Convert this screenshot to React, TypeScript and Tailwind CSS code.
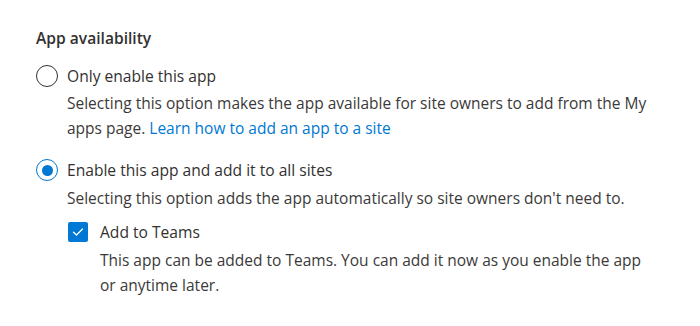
import React from "react";

export default function App() {
  return (
    <div className="w-[700px] h-[326px] bg-white text-[#323130] pl-[36px] pt-[27px] font-['Open_Sans',sans-serif]">
      <div className="text-[15.6px] leading-[22px] font-semibold">App availability</div>

      <div className="mt-[16px] flex items-center">
        <div className="w-[22px] h-[22px] rounded-full border border-[#323130] box-border" />
        <div className="ml-[9px] text-[15.6px] leading-[22px]">Only enable this app</div>
      </div>
      <div className="pl-[31px] mt-[4px] text-[15.5px] leading-[25px] text-[#3b3a39]">
        Selecting this option makes the app available for site owners to add from the My
        <br />
        apps page. <span className="text-[#0078d4]">Learn how to add an app to a site</span>
      </div>

      <div className="mt-[18px] flex items-center">
        <div className="w-[22px] h-[22px] rounded-full border border-[#0078d4] box-border flex items-center justify-center">
          <div className="w-[11px] h-[11px] rounded-full bg-[#0078d4]" />
        </div>
        <div className="ml-[9px] text-[15.6px] leading-[22px]">Enable this app and add it to all sites</div>
      </div>
      <div className="pl-[31px] mt-[5px] text-[15.5px] leading-[25px] text-[#3b3a39]">
        Selecting this option adds the app automatically so site owners don't need to.
      </div>

      <div className="pl-[32px] mt-[10px] flex items-center">
        <div className="w-[20px] h-[20px] rounded-[2px] bg-[#0078d4] flex items-center justify-center">
          <svg width="12" height="12" viewBox="0 0 12 12" fill="none">
            <path d="M1.5 6.2 L4.5 9 L10.5 3" stroke="white" strokeWidth="1.3" strokeLinecap="round" strokeLinejoin="round" />
          </svg>
        </div>
        <div className="ml-[12px] text-[15.6px] leading-[22px]">Add to Teams</div>
      </div>
      <div className="pl-[64px] mt-[5px] text-[15.5px] leading-[25px] text-[#3b3a39]">
        This app can be added to Teams. You can add it now as you enable the app
        <br />
        or anytime later.
      </div>
    </div>
  );
}
